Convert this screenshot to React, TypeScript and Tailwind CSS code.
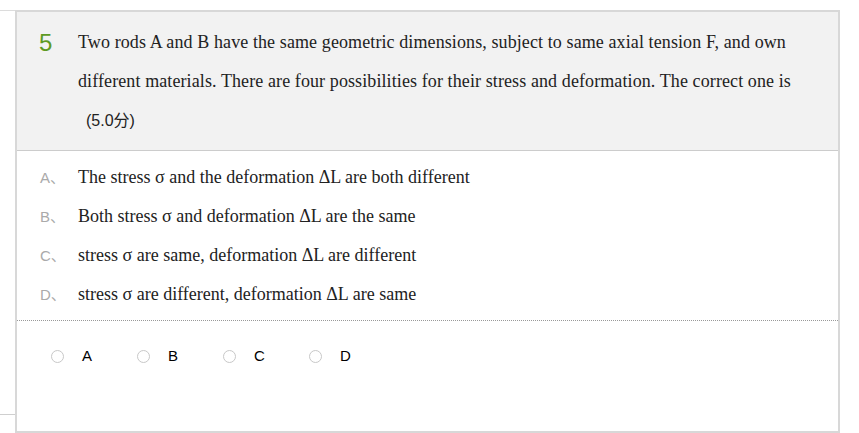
const options = [
  { key: "A", text: "The stress σ and the deformation ΔL are both different" },
  { key: "B", text: "Both stress σ and deformation ΔL are the same" },
  { key: "C", text: "stress σ are same, deformation ΔL are different" },
  { key: "D", text: "stress σ are different, deformation ΔL are same" },
];

export default function App() {
  return (
    <div className="relative h-[433px] w-[859px] overflow-hidden bg-white">
      <div className="absolute left-0 top-[10px] h-px w-[15px] bg-[#dcdcdc]" />
      <div className="absolute left-0 top-[414px] h-px w-[15px] bg-[#cfcfcf]" />

      <div className="ml-[15px] mt-[10px] h-[423px] w-[825px] border-2 border-[#d8d8d8]">
        <div className="flex h-[139px] border-b border-[#cccccc] bg-[#f2f2f2] pt-[11px]">
          <div
            className="w-[61px] pl-[22px] text-[24px] leading-[39px] text-[#5e9a24]"
            style={{ fontFamily: '"Liberation Sans", Arial, sans-serif' }}
          >
            5
          </div>
          <div className="flex-1">
            <p
              className="whitespace-nowrap text-[18px] leading-[39px] tracking-[0.1px] text-[#222]"
              style={{ fontFamily: '"Liberation Serif", "Times New Roman", serif' }}
            >
              Two rods A and B have the same geometric dimensions, subject to same axial tension F, and own
              <br />
              different materials. There are four possibilities for their stress and deformation. The correct one is
            </p>
            <p
              className="pl-[8px] text-[16px] leading-[39px] text-[#222]"
              style={{ fontFamily: '"Liberation Sans", Arial, "Noto Sans CJK SC", sans-serif' }}
            >
              (5.0分)
            </p>
          </div>
        </div>

        <div className="border-b border-dotted border-[#999] pb-[6px] pt-[7px]">
          {options.map((o) => (
            <div key={o.key} className="flex leading-[39px]">
              <span
                className="w-[61px] pl-[23px] text-[15px] text-[#aaaaaa]"
                style={{ fontFamily: '"Liberation Sans", Arial, "Noto Sans CJK SC", sans-serif' }}
              >
                {o.key}、
              </span>
              <span
                className="text-[18px] text-[#222]"
                style={{ fontFamily: '"Liberation Serif", "Times New Roman", serif' }}
              >
                {o.text}
              </span>
            </div>
          ))}
        </div>

        <div className="flex pl-[34px] pt-[25px]">
          {options.map((o) => (
            <label key={o.key} className="flex w-[86px] items-center">
              <span className="h-[13px] w-[13px] rounded-full border border-[#c8c8c8] bg-white" />
              <span
                className="ml-[18px] text-[15px] leading-[20px] text-black"
                style={{ fontFamily: '"Liberation Sans", Arial, sans-serif' }}
              >
                {o.key}
              </span>
            </label>
          ))}
        </div>
      </div>
    </div>
  );
}
